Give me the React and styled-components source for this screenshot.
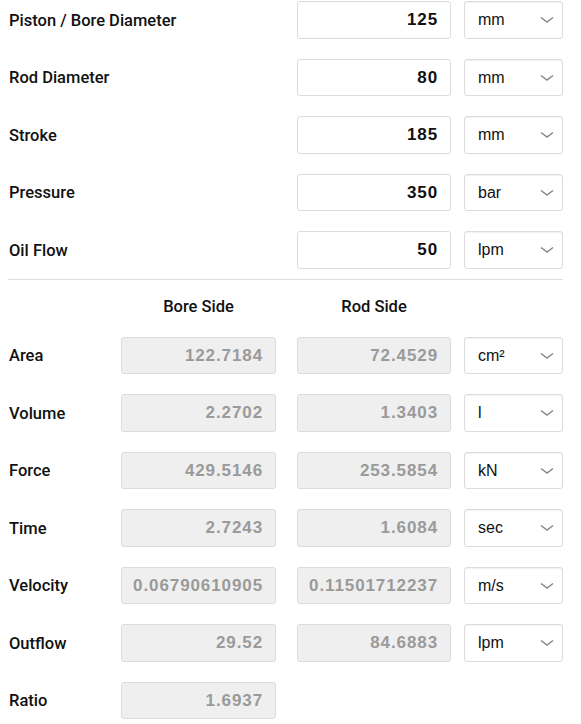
import React from "react";
import styled, { createGlobalStyle } from "styled-components";

const Global = createGlobalStyle`
  html, body { margin: 0; padding: 0; background: #fff; }
  body { font-family: Roboto, "Liberation Sans", Arial, sans-serif; color: #111; }
`;

const Page = styled.div`
  padding: 1px 18px 0 8px;
  width: 581px;
  box-sizing: border-box;
`;

const Grid = styled.div`
  display: grid;
  grid-template-columns: 113px 176px 167px 99px;
  grid-template-rows: ${(p) => (p.$head ? "37px" : "37.5px")};
  grid-auto-rows: 37.5px;
  row-gap: 20px;
  align-items: center;
`;

const Label = styled.div`
  font-size: 16.5px;
  font-weight: 500;
  color: #111;
  padding-left: 1px;
  padding-top: 1px;
`;

const Wide = styled(Label)`
  grid-column: 1 / 3;
`;

const Field = styled.div`
  box-sizing: border-box;
  height: 37.5px;
  width: ${(p) => p.$w}px;
  border: 1px solid #dcdcdc;
  border-radius: 3px;
  background: ${(p) => (p.$ro ? "#efefef" : "#fff")};
  color: ${(p) => (p.$ro ? "#9a9a9a" : "#111")};
  display: flex;
  align-items: center;
  justify-content: flex-end;
  padding: 1px 12px 0 0;
  font-family: "Liberation Sans", Arial, sans-serif;
  font-weight: 700;
  font-size: 17px;
  letter-spacing: 0.9px;
`;

const Select = styled.div`
  box-sizing: border-box;
  height: 37.5px;
  width: 99px;
  border: 1px solid #dcdcdc;
  border-radius: 3px;
  box-shadow: inset 0 1px 1px rgba(0, 0, 0, 0.06);
  background: #fff;
  display: flex;
  align-items: center;
  justify-content: space-between;
  padding: 1px 8px 0 13px;
  font-family: "Liberation Sans", Arial, sans-serif;
  font-size: 16px;
  color: #111;
`;

const Sep = styled.div`
  height: 1px;
  background: #dedede;
  margin: 10px 0 0;
  width: 555px;
`;

const Head = styled.div`
  font-size: 16.5px;
  font-weight: 500;
  width: ${(p) => p.$w}px;
  text-align: center;
  align-self: end;
  margin-bottom: 1px;
`;

const Chevron = () => (
  <svg width="14" height="8" viewBox="0 0 14 8">
    <path d="M1 1.5 L7 6 L13 1.5" fill="none" stroke="#888" strokeWidth="1.5" />
  </svg>
);

const inputs = [
  ["Piston / Bore Diameter", "125", "mm"],
  ["Rod Diameter", "80", "mm"],
  ["Stroke", "185", "mm"],
  ["Pressure", "350", "bar"],
  ["Oil Flow", "50", "lpm"],
];

const results = [
  ["Area", "122.7184", "72.4529", "cm²"],
  ["Volume", "2.2702", "1.3403", "l"],
  ["Force", "429.5146", "253.5854", "kN"],
  ["Time", "2.7243", "1.6084", "sec"],
  ["Velocity", "0.06790610905", "0.11501712237", "m/s"],
  ["Outflow", "29.52", "84.6883", "lpm"],
  ["Ratio", "1.6937", null, null],
];

export default function App() {
  return (
    <Page>
      <Global />
      <Grid>
        {inputs.map(([l, v, u]) => (
          <React.Fragment key={l}>
            <Wide>{l}</Wide>
            <Field $w={154}>{v}</Field>
            <Select>
              <span>{u}</span>
              <Chevron />
            </Select>
          </React.Fragment>
        ))}
      </Grid>
      <Sep />
      <Grid $head>
        <div />
        <Head $w={155}>Bore Side</Head>
        <Head $w={154}>Rod Side</Head>
        <div />
        {results.map(([l, a, b, u]) => (
          <React.Fragment key={l}>
            <Label>{l}</Label>
            <Field $ro $w={155}>{a}</Field>
            {b ? <Field $ro $w={154}>{b}</Field> : <div />}
            {u ? (
              <Select>
                <span>{u}</span>
                <Chevron />
              </Select>
            ) : (
              <div />
            )}
          </React.Fragment>
        ))}
      </Grid>
    </Page>
  );
}
